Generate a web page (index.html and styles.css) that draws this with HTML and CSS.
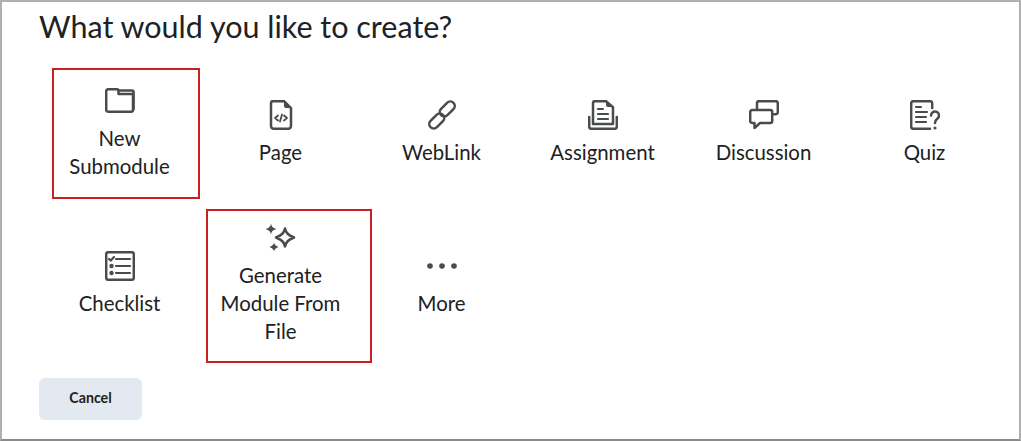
FILE: index.html
```html
<!DOCTYPE html>
<html lang="en">
<head>
<meta charset="utf-8">
<title>What would you like to create?</title>
<link rel="stylesheet" href="styles.css">
</head>
<body>
<main class="frame">
  <h1 class="title">What would you like to create?</h1>
  <div class="grid">
    <div class="item item-tall">
      <span class="callout callout-sub"></span>
      <svg class="icon" viewBox="0 0 30 30"><path class="s" d="M3 4.200h9a1.500 1.500 0 0 1 1.500 1.500V9H28v15.800a2 2 0 0 1-2 2H3.200a2 2 0 0 1-2-2V6a2 2 0 0 1 1.800-1.800z"/><path class="s" d="M13.500 5.500H27a1.600 1.600 0 0 1 1.600 1.600V24"/></svg>
      <span class="label">New<br>Submodule</span>
    </div>
    <div class="item">
      <svg class="icon" viewBox="0 0 30 30"><path class="s" d="M7 1.200h11l7 7V26a3 3 0 0 1-3 2.800H8A3 3 0 0 1 5 26V3.200a2 2 0 0 1 2-2z"/><path class="f" d="M18 1l7 7h-5a2 2 0 0 1-2-2z"/><path class="t" d="M12 15.500l-3 2.500 3 2.500M18 15.500l3 2.500-3 2.500M16 14.500l-2 7"/></svg>
      <span class="label">Page</span>
    </div>
    <div class="item">
      <svg class="icon" viewBox="0 0 30 30"><rect class="s" x="11.500" y="4.500" width="17.500" height="9" rx="4.500" transform="rotate(-45 20.250 9)"/><rect class="s" x="1" y="16.500" width="17.500" height="9" rx="4.500" transform="rotate(-45 9.750 21)"/></svg>
      <span class="label">WebLink</span>
    </div>
    <div class="item">
      <svg class="icon" viewBox="0 0 30 30"><path class="s" d="M7 1.200h11l7 6V24H5V3.200a2 2 0 0 1 2-2z"/><path class="f" d="M18 1l7 6h-5a2 2 0 0 1-2-2z"/><path class="s" d="M1.200 17v9.800a2 2 0 0 0 2 2h23.600a2 2 0 0 0 2-2V17"/><path class="m" d="M10 9h5M10 14h10M10 19h10"/></svg>
      <span class="label">Assignment</span>
    </div>
    <div class="item">
      <svg class="icon" viewBox="0 0 30 30"><path class="s" d="M8 9.500V3.200a2 2 0 0 1 2-2h16.800a2 2 0 0 1 2 2v9a2 2 0 0 1-2 2H25"/><path class="s" d="M3.200 10h18a2 2 0 0 1 2 2v9a2 2 0 0 1-2 2H11l-5.500 5v-5H3.200a2 2 0 0 1-2-2v-9a2 2 0 0 1 2-2z"/></svg>
      <span class="label">Discussion</span>
    </div>
    <div class="item">
      <svg class="icon" viewBox="0 0 30 30"><path class="s" d="M20 28.800H3.200a2 2 0 0 1-2-2V3.200a2 2 0 0 1 2-2h17a2 2 0 0 1 2 2V8"/><path class="m" d="M6 7h5M6 12h11M6 17h10M6 22h10"/><path class="s" d="M21 15.500a4 4 0 1 1 6.500 3.100c-1.500 1.200-2.500 2-2.500 4.400"/><circle class="d" cx="25" cy="28" r="1.600"/></svg>
      <span class="label">Quiz</span>
    </div>
    <div class="item">
      <svg class="icon" viewBox="0 0 30 30"><rect class="s" x="1.200" y="1.200" width="27.600" height="27.600" rx="2"/><path class="k" d="M4 8l1.800 1.600L9 6"/><path class="m" d="M11 8h14M11 15h14M11 22h14"/><circle class="d" cx="6.500" cy="15" r="2.200"/><circle class="d" cx="6.500" cy="22" r="2.200"/></svg>
      <span class="label">Checklist</span>
    </div>
    <div class="item item-tall">
      <span class="callout callout-gen"></span>
      <svg class="icon" viewBox="0 0 30 30"><path class="s" d="M19 6.500c1 4.500 3 6.500 9 9-6 2.500-8 4.500-9 9-1-4.500-3-6.500-9-9 6-2.500 8-4.500 9-9z"/><path class="d" d="M5 1.500c.6 3 1.500 4.300 5.500 5.500-4 1.200-4.900 2.500-5.500 5.500C4.400 9.500 3.500 8.200-.5 7 3.500 5.800 4.400 4.500 5 1.500zM8 20.500c.5 2 1.200 3.300 4.500 4.500-3.300 1.200-4 2.500-4.500 4.500-.5-2-1.200-3.300-4.500-4.500 3.300-1.200 4-2.500 4.500-4.500z"/></svg>
      <span class="label">Generate<br>Module From<br>File</span>
    </div>
    <div class="item">
      <svg class="icon" viewBox="0 0 30 30"><circle class="d" cx="3" cy="15" r="2.800"/><circle class="d" cx="15" cy="15" r="2.800"/><circle class="d" cx="27" cy="15" r="2.800"/></svg>
      <span class="label">More</span>
    </div>
  </div>
  <button class="cancel" type="button">Cancel</button>
</main>
</body>
</html>
```

FILE: styles.css
```css
* { box-sizing: border-box; }
html, body { margin: 0; padding: 0; background: #fff; }
.frame {
  width: 1021px;
  height: 441px;
  overflow: hidden;
  padding: 0 37px;
  border: 2px solid #b0b0b0;
  border-bottom-color: #8a8a8a;
  font-family: Lato, "Liberation Sans", sans-serif;
  color: #202122;
}
.title {
  margin: 4px 0 0;
  font-size: 30.5px;
  line-height: 40px;
  font-weight: 400;
}
.grid {
  display: grid;
  grid-template-columns: repeat(6, 161px);
  grid-template-rows: 130px 158px;
  row-gap: 7px;
  margin-top: 22px;
}
.item {
  position: relative;
  display: flex;
  flex-direction: column;
  align-items: center;
  justify-content: center;
  text-align: center;
}
.icon { width: 30px; height: 30px; display: block; margin-bottom: 8px; }
.item-tall .icon { margin-bottom: 9px; }
.label { font-size: 20.4px; line-height: 28px; }
.item-tall .label { margin-bottom: 1px; }
.s, .t, .m, .k { fill: none; stroke: #494c4e; stroke-linecap: round; stroke-linejoin: round; }
.s { stroke-width: 2.500; }
.t { stroke-width: 1.800; }
.m { stroke-width: 2.200; }
.k { stroke-width: 2.200; }
.f, .d { fill: #494c4e; }
.callout { position: absolute; border: 2px solid #c91f1f; pointer-events: none; }
.callout-sub { left: 13px; top: 0; width: 148px; height: 131px; }
.callout-gen { left: 6px; top: 4px; width: 166px; height: 154px; }
.cancel {
  display: block;
  width: 103px;
  height: 42px;
  margin-top: 15px;
  border: 0;
  border-radius: 6px;
  background: #e3e9f1;
  color: #202122;
  font: 700 14.2px Lato, "Liberation Sans", sans-serif;
  padding: 0 0 3px;
}
```
